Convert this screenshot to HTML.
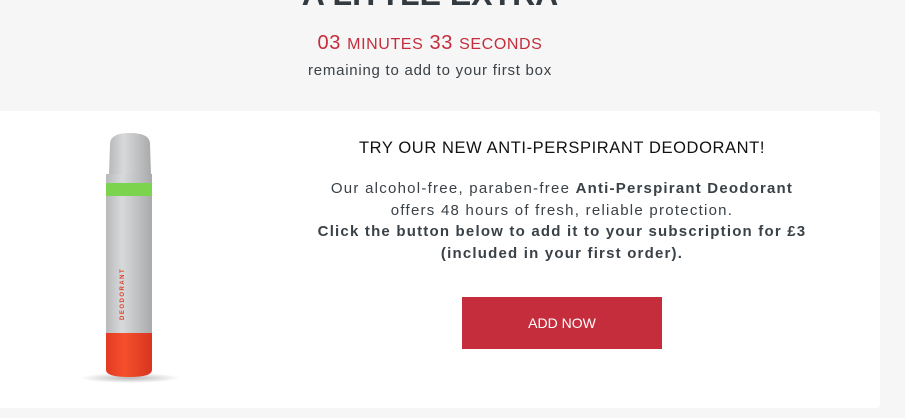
<!DOCTYPE html>
<html><head><meta charset="utf-8"><style>
*{margin:0;padding:0;box-sizing:border-box}
body{width:905px;height:418px;background:#f6f6f6;font-family:"Liberation Sans",sans-serif;position:relative;overflow:hidden;color:#3a4147}
.h{position:absolute;left:0;width:860px;text-align:center;top:-24px;font-size:32px;font-weight:bold;color:#333a40;letter-spacing:0}
.t{position:absolute;left:0;width:860px;text-align:center;top:32px;font-size:20px;color:#c52d3c;letter-spacing:0.6px}
.t small{font-size:16px}
.r{position:absolute;left:0;width:860px;text-align:center;top:62px;font-size:15px;color:#3a4147;letter-spacing:0.75px}
.card{position:absolute;left:0;top:111px;width:880px;height:297px;background:#fff;border-radius:0 4px 4px 0}
.title{position:absolute;left:262px;width:600px;text-align:center;top:139px;font-size:16.5px;color:#111;letter-spacing:0.6px}
.p{position:absolute;left:212px;width:700px;text-align:center;top:178px;font-size:15px;line-height:21.7px;color:#3a4147;letter-spacing:1.25px}
.p b{letter-spacing:1.2px}
.btn{position:absolute;left:462px;top:297px;width:200px;height:52px;background:#c52d3c;color:#fff;font-size:14px;text-align:center;line-height:52px}
</style></head><body>
<div class="h">A LITTLE EXTRA</div>
<div class="t">03 <small>MINUTES</small> 33 <small>SECONDS</small></div>
<div class="r">remaining to add to your first box</div>
<div class="card"></div>
<svg style="position:absolute;left:60px;top:120px" width="150" height="280">
<defs>
<linearGradient id="g" x1="0" x2="1"><stop offset="0" stop-color="#b8b9ba"/><stop offset=".35" stop-color="#d8d9da"/><stop offset="1" stop-color="#a9aaab"/></linearGradient>
<linearGradient id="rd" x1="0" x2="1"><stop offset="0" stop-color="#e33a22"/><stop offset=".4" stop-color="#f4502c"/><stop offset="1" stop-color="#d93420"/></linearGradient>
<radialGradient id="sh"><stop offset="0" stop-color="#999" stop-opacity=".7"/><stop offset="1" stop-color="#999" stop-opacity="0"/></radialGradient>
</defs>
<ellipse cx="70" cy="258" rx="50" ry="5" fill="url(#sh)"/>
<path d="M50 24 Q50 13 70 13 Q90 13 90 24 L91 54 L49 54 Z" fill="url(#g)"/>
<rect x="46" y="54" width="46" height="180" fill="url(#g)"/>
<rect x="46" y="63" width="46" height="13" fill="#7cd44e"/>
<path d="M46 213 H92 V250 Q92 257 69 257 Q46 257 46 250 Z" fill="url(#rd)"/>
<text x="64" y="200" transform="rotate(-90 64 200)" font-size="6" fill="#e33a22" font-weight="bold" letter-spacing="1.5">DEODORANT</text>
</svg>
<div class="title">TRY OUR NEW ANTI-PERSPIRANT DEODORANT!</div>
<div class="p">Our alcohol-free, paraben-free <b>Anti-Perspirant Deodorant</b><br>offers 48 hours of fresh, reliable protection.<br><b>Click the button below to add it to your subscription for £3<br>(included in your first order).</b></div>
<div class="btn">ADD NOW</div>
</body></html>
